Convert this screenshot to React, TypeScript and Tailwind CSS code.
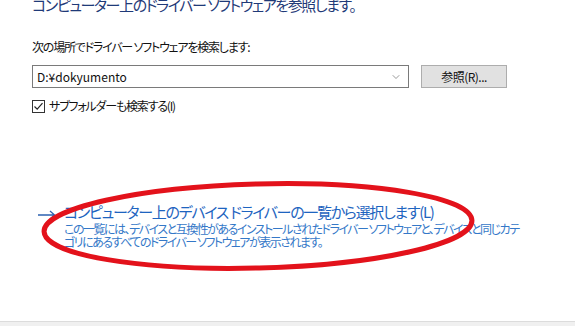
import { ChevronDown } from 'lucide-react'

const jp = "font-['Noto_Sans_CJK_JP','Noto_Sans',sans-serif] [font-feature-settings:'palt']"

function CheckBox() {
    return (
        <svg width="13" height="13" viewBox="0 0 13 13" className="shrink-0">
            <rect x="0.5" y="0.5" width="12" height="12" fill="white" stroke="#333" />
            <path d="M2.5 6.5 L5.2 9.2 L10.5 3.2" fill="none" stroke="#222" strokeWidth="1.2" />
        </svg>
    )
}

function Arrow() {
    return (
        <svg width="18" height="10" viewBox="0 0 18 10" className="shrink-0">
            <path d="M0 5 H16 M12 1 L16.5 5 L12 9" fill="none" stroke="#2d62b0" strokeWidth="1.3" />
        </svg>
    )
}

export default function App() {
    return (
        <div className={`relative w-[575px] h-[326px] bg-white overflow-hidden flex flex-col ${jp}`}>
            <div className="flex-1 flex flex-col pl-[32px]">
                <h1 className="mt-[-5px] text-[15px] leading-[20px] tracking-[-1.4px] text-[#1f3a78] whitespace-nowrap">
                    コンピューター上のドライバー ソフトウェアを参照します。
                </h1>
                <p className="mt-[24px] text-[12px] leading-[16px] tracking-[-1.2px] text-[#111]">
                    次の場所でドライバー ソフトウェアを検索します:
                </p>
                <div className="mt-[10px] flex items-center gap-[12px]">
                    <div className="w-[377px] h-[23px] border border-[#7a7a7a] flex items-center justify-between pl-[4px] pr-[6px] text-[12px] text-[#111]">
                        <span>D:¥dokyumento</span>
                        <ChevronDown size={12} strokeWidth={1.2} color="#555" />
                    </div>
                    <button className="w-[86px] h-[23px] bg-[#e1e1e1] border border-[#adadad] text-[12px] tracking-[-0.5px] text-[#111]">
                        参照(R)...
                    </button>
                </div>
                <label className="mt-[10px] flex items-center gap-[4px] text-[12px] leading-[16px] tracking-[-1.2px] text-[#111]">
                    <CheckBox />
                    <span>サブフォルダーも検索する(I)</span>
                </label>
                <div className="mt-[88px] flex items-start gap-[8px] pl-[6px]">
                    <div className="pt-[8px]">
                        <Arrow />
                    </div>
                    <div className="flex flex-col">
                        <span className="text-[15px] leading-[19px] tracking-[-1.3px] text-[#1e64c0] whitespace-nowrap">
                            コンピューター上のデバイス ドライバーの一覧から選択します(L)
                        </span>
                        <span className="mt-[1px] text-[12px] leading-[13px] tracking-[-1.5px] text-[#3478c8] whitespace-nowrap">
                            この一覧には、デバイスと互換性があるインストールされたドライバー ソフトウェアと、デバイスと同じカテ
                            <br />
                            ゴリにあるすべてのドライバー ソフトウェアが表示されます。
                        </span>
                    </div>
                </div>
            </div>
            <div className="h-[5px] border-t border-[#dcdcdc] bg-[#f0f0f0]" />
            <svg className="absolute left-0 top-0 pointer-events-none" width="575" height="326" viewBox="0 0 575 326">
                <ellipse cx="258" cy="226" rx="214" ry="42" fill="none" stroke="#e3121b" strokeWidth="5" transform="rotate(-1.5 258 226)" />
            </svg>
        </div>
    )
}
